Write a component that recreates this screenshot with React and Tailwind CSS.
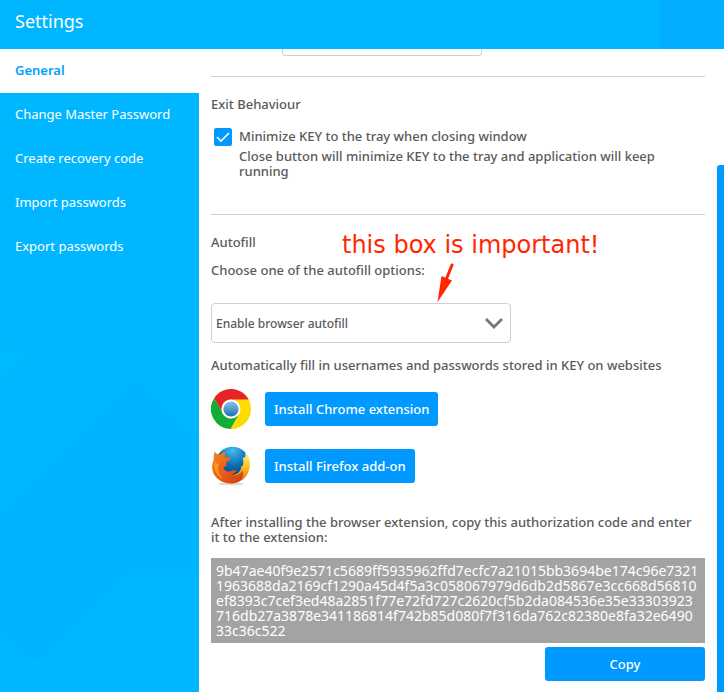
import React, { useState } from 'react';

const menuItems = [
  'General',
  'Change Master Password',
  'Create recovery code',
  'Import passwords',
  'Export passwords',
];

const authCode = `9b47ae40f9e2571c5689ff5935962ffd7ecfc7a21015bb3694be174c96e7321
1963688da2169cf1290a45d4f5a3c058067979d6db2d5867e3cc668d56810
ef8393c7cef3ed48a2851f77e72fd727c2620cf5b2da084536e35e33303923
716db27a3878e341186814f742b85d080f7f316da762c82380e8fa32e6490
33c36c522`;

function Backdrop() {
  return (
    <svg
      className="absolute inset-0 w-full h-full"
      viewBox="0 0 724 692"
      preserveAspectRatio="xMinYMin slice"
      aria-hidden="true"
    >
      <rect width="724" height="692" fill="#00b7ff" />
      <path d="M33 28 L57 0 H0 V60 Z" fill="#00b5ff" />
      <path d="M660 0H724V49H660Z" fill="#00adff" />
      <path d="M0 350H27L0 379Z" fill="#00baff" />
      <path d="M134 381L199 445V570H130L37 662L0 626V516Z" fill="#00b3ff" />
    </svg>
  );
}

function ChromeLogo() {
  return (
    <svg className="w-10 h-10 shrink-0" viewBox="0 0 40 40" aria-hidden="true">
      <defs>
        <linearGradient id="chromeBlue" x1="0" y1="0" x2="0" y2="1">
          <stop offset="0" stopColor="#8cc4e8" />
          <stop offset="1" stopColor="#1672b8" />
        </linearGradient>
      </defs>
      <circle cx="20" cy="20" r="20" fill="#ffdc00" />
      <path d="M3.2 9.2 A20 20 0 0 1 37.6 10.5 H20 A9.5 9.5 0 0 0 11.8 24.7 Z" fill="#e5242a" />
      <path d="M3.2 9.2 L11.8 24.7 A9.5 9.5 0 0 0 28 25 L19.4 40 A20 20 0 0 1 3.2 9.2 Z" fill="#0fae3c" />
      <circle cx="20" cy="20" r="9.5" fill="#fff" />
      <circle cx="20" cy="20" r="7.6" fill="url(#chromeBlue)" />
    </svg>
  );
}

function FirefoxLogo() {
  return (
    <svg className="w-10 h-10 shrink-0" viewBox="0 0 40 40" aria-hidden="true">
      <defs>
        <radialGradient id="foxGlobe" cx="0.5" cy="0.1" r="0.9">
          <stop offset="0" stopColor="#45bdea" />
          <stop offset="0.5" stopColor="#0a70b8" />
          <stop offset="1" stopColor="#073467" />
        </radialGradient>
        <linearGradient id="foxBody" x1="0" y1="0" x2="1" y2="1">
          <stop offset="0" stopColor="#f18a1d" />
          <stop offset="0.5" stopColor="#ee5d16" />
          <stop offset="1" stopColor="#cf3d16" />
        </linearGradient>
        <linearGradient id="foxTail" x1="0" y1="0" x2="0" y2="1">
          <stop offset="0" stopColor="#fff3a0" />
          <stop offset="0.45" stopColor="#ffc51c" />
          <stop offset="1" stopColor="#ea5c16" />
        </linearGradient>
      </defs>
      <ellipse cx="20" cy="38" rx="13" ry="1.3" fill="#dadada" />
      <circle cx="21.5" cy="17.5" r="16.8" fill="url(#foxGlobe)" />
      <path
        d="M34 6 C38 10 39.6 15 38.8 21 C37.5 31 29 38 19.5 37.5 L20 29 C27 29 30 25 30.5 20 C32.5 21 33 16 31.5 11.5 C34.5 13 35 9 34 6 Z"
        fill="url(#foxTail)"
      />
      <path
        d="M3.8 5.4 C5 7.7 7 8.7 9 8.7 C11 7.2 13.3 6.4 15.8 6.1 C13.9 8 13.4 9.5 14 11.1 C15.8 11.6 18 11.1 19.8 12 C20 13.8 17.2 14.6 15.5 16.4 C15 18 15 19 15.5 20.2 C13.5 20.2 12.6 21.2 12.5 22.5 C14 25.8 18 25.8 20.8 24.8 C23.3 24 25 24.4 26 25.3 C24.4 26.1 23 28 19.5 28.6 C24 30.5 29 29 31.5 24.5 C33 30 31.5 33.5 28.4 35 C20.8 39.5 10.2 37.4 4.7 30.7 C0.5 25.8 0.2 19.2 2.8 13.5 C2.6 10.7 2.7 8 3.8 5.4 Z"
        fill="url(#foxBody)"
      />
      <path d="M4 15 C2 21 4 29 12 33 C7 28 6 22 8 18 C6 18 5 17 4 15 Z" fill="#f79a20" />
    </svg>
  );
}

function ExtensionRow({ logo, label }) {
  return (
    <div className="flex items-center gap-[14px] h-10">
      {logo}
      <button type="button" className="h-[34px] px-[9px] rounded-[3px] bg-[#0099ff] text-white">
        {label}
      </button>
    </div>
  );
}

export default function App() {
  const [minimize, setMinimize] = useState(true);
  const [autofill, setAutofill] = useState('browser');

  return (
    <div className="relative min-h-screen flex flex-col bg-[#00b7ff] text-[13px] leading-[15px] text-[#5a5a5a] font-['Noto_Sans','Open_Sans',sans-serif]">
      <Backdrop />

      {/* Header */}
      <header className="relative h-[49px] px-[15px] flex items-center pb-2">
        <h1 className="text-[18px] leading-6 text-white">Settings</h1>
      </header>

      <div className="relative flex-1 flex">
        {/* Sidebar */}
        <nav className="w-[199px] shrink-0">
          {menuItems.map((item, i) => (
            <a
              key={item}
              href="#"
              className={
                i === 0
                  ? 'flex items-center h-11 px-[15px] pb-0.5 bg-white text-[#00a2ff] font-semibold'
                  : 'flex items-center h-11 px-[15px] pb-0.5 text-white'
              }
            >
              {item}
            </a>
          ))}
        </nav>

        {/* Content */}
        <div className="flex-1 min-w-0 bg-white flex font-medium">
          <main className="flex-1 min-w-0 px-3 pb-[11px]">
            <div className="ml-[71px] w-[200px] h-[7px] border border-t-0 border-[#d0d0d0] rounded-b-[4px]" />

            <section className="mt-5 border-t border-[#d2d2d2] pt-5">
              <h2>Exit Behaviour</h2>
              <div className="mt-4 flex items-start gap-[7px] pl-[3px]">
                <span className="grid shrink-0">
                  <input
                    id="minimize"
                    type="checkbox"
                    checked={minimize}
                    onChange={(e) => setMinimize(e.target.checked)}
                    className="col-start-1 row-start-1 w-[18px] h-[18px] appearance-none rounded-[2px] border border-[#0099ff] checked:bg-[#0099ff]"
                  />
                  {minimize && (
                    <svg className="col-start-1 row-start-1 w-[18px] h-[18px] pointer-events-none" viewBox="0 0 18 18">
                      <path d="M3 9l4 4 8-8" fill="none" stroke="#fff" strokeWidth="1.6" />
                    </svg>
                  )}
                </span>
                <div className="max-w-[450px]">
                  <label htmlFor="minimize" className="block mt-px">
                    Minimize KEY to the tray when closing window
                  </label>
                  <p className="mt-[5px]">
                    Close button will minimize KEY to the tray and application will keep running
                  </p>
                </div>
              </div>
            </section>

            <section className="relative mt-[35px] border-t border-[#d2d2d2] pt-5">
              <h2>Autofill</h2>
              <label htmlFor="autofill" className="block mt-[13px]">
                Choose one of the autofill options:
              </label>

              {/* Hand-added note pointing at the drop-down */}
              <p className="absolute left-[131px] top-4 whitespace-nowrap text-[24px] leading-7 font-normal text-[#ff2600] font-['DejaVu_Sans',sans-serif]">
                this box is important!
              </p>
              <svg className="absolute left-[225px] top-[47px] w-5 h-10" viewBox="0 0 20 40" aria-hidden="true">
                <path d="M16 3L10 18" stroke="#ff2600" strokeWidth="3" strokeLinecap="round" />
                <path d="M1.5 40L5.5 14L16 18.5Z" fill="#ff2600" />
              </svg>

              <div className="mt-[25px] grid w-full max-w-[300px]">
                <select
                  id="autofill"
                  value={autofill}
                  onChange={(e) => setAutofill(e.target.value)}
                  className="col-start-1 row-start-1 h-10 w-full appearance-none rounded-[4px] border border-[#d0d0d0] bg-white px-1 text-[12px]"
                >
                  <option value="browser">Enable browser autofill</option>
                  <option value="off">Disable autofill</option>
                </select>
                <svg
                  className="col-start-1 row-start-1 justify-self-end self-center mr-[7px] w-5 h-5 pointer-events-none"
                  viewBox="0 0 20 20"
                  aria-hidden="true"
                >
                  <path d="M2 6l8 8 8-8" fill="none" stroke="#777" strokeWidth="2.8" />
                </svg>
              </div>

              <p className="mt-[15px]">
                Automatically fill in usernames and passwords stored in KEY on websites
              </p>
              <div className="mt-4 flex flex-col gap-[17px]">
                <ExtensionRow logo={<ChromeLogo />} label="Install Chrome extension" />
                <ExtensionRow logo={<FirefoxLogo />} label="Install Firefox add-on" />
              </div>

              <p className="mt-[29px] pr-2">
                After installing the browser extension, copy this authorization code and enter it to the extension:
              </p>
              <code className="mt-[13px] block whitespace-pre-line bg-[#a3a3a3] p-[5px] text-[14px] font-normal text-white font-['Noto_Sans','Open_Sans',sans-serif]">
                {authCode}
              </code>
              <button type="button" className="mt-1 ml-auto block w-40 h-[34px] rounded-[3px] bg-[#0099ff] text-white">
                Copy
              </button>
            </section>
          </main>

          {/* Scrollbar */}
          <div className="w-[7px] shrink-0 pt-[116px] flex">
            <div className="flex-1 rounded-tl-[3px] bg-[#0099ff]" />
          </div>
        </div>
      </div>
    </div>
  );
}
